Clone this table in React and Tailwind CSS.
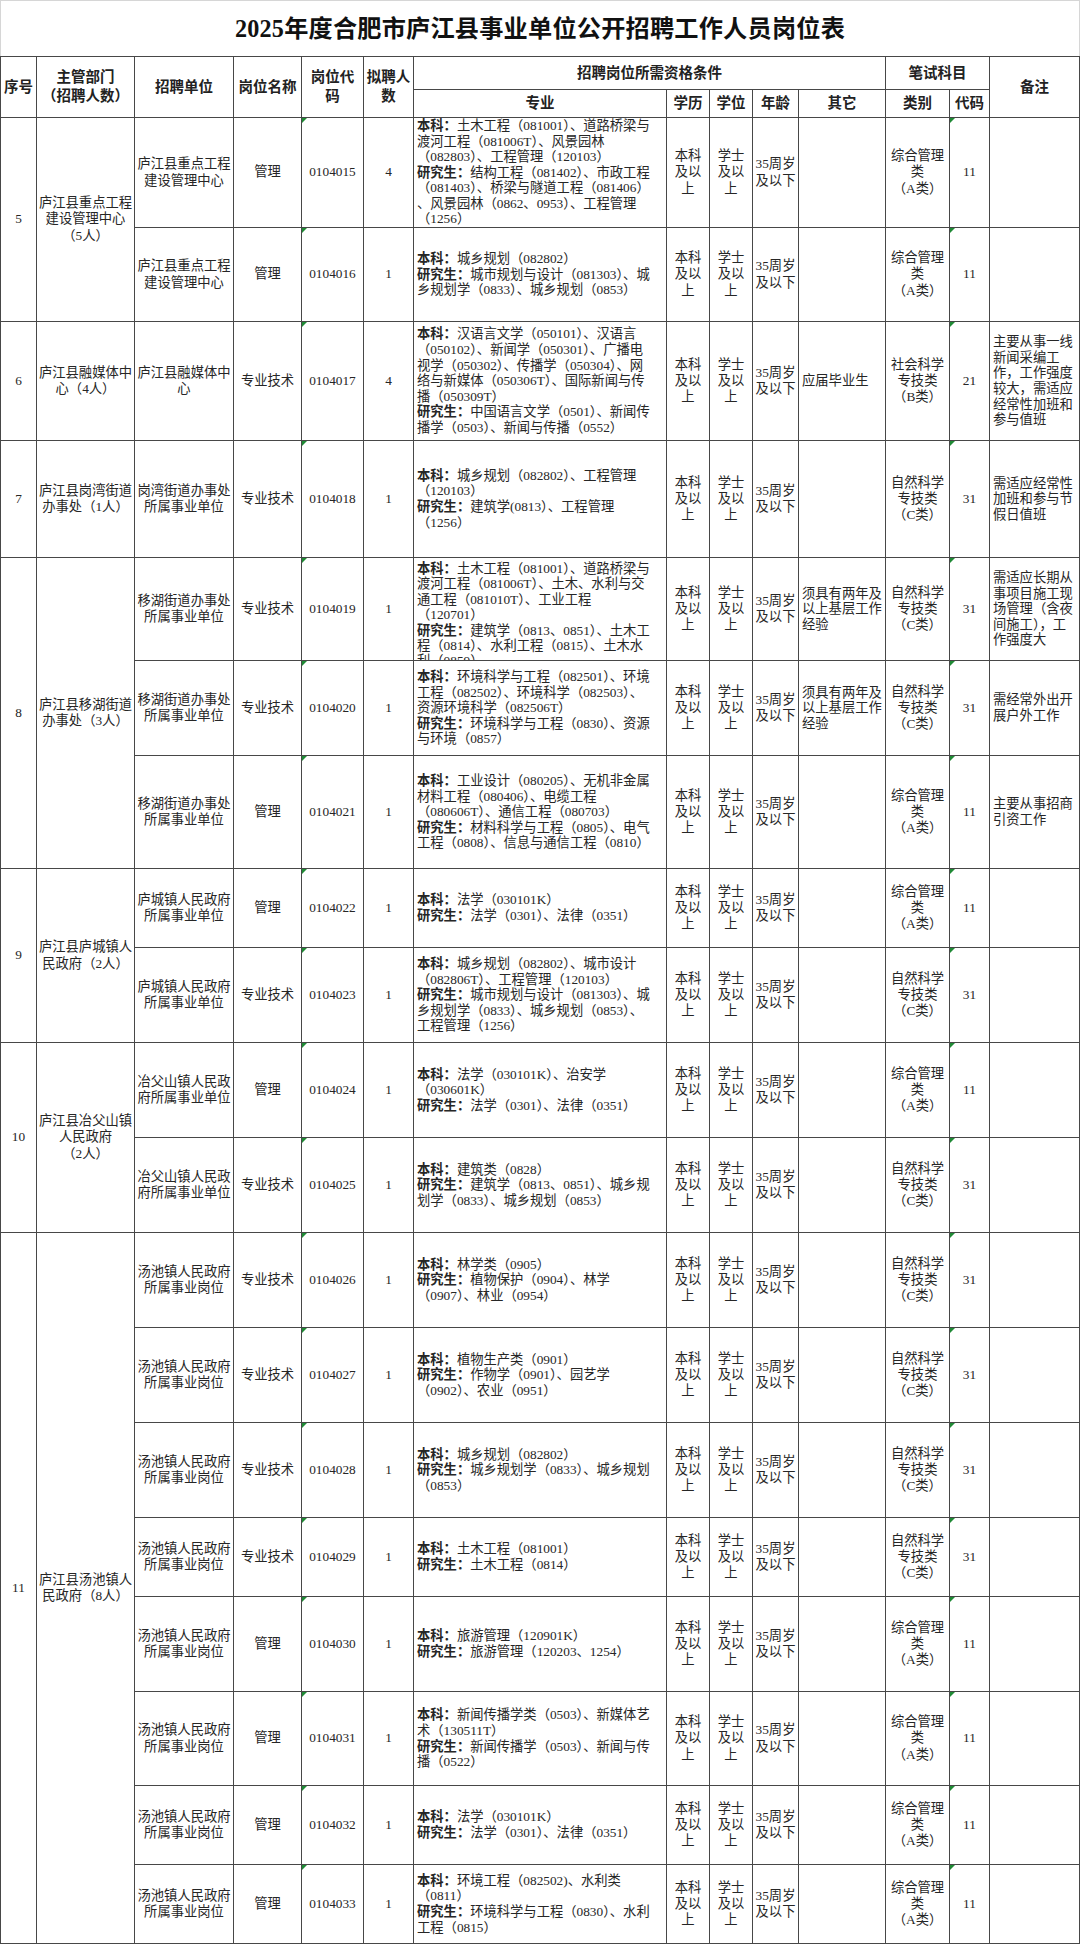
import React from 'react';

const CAT = {
  A: { lines: ['综合管理', '类', '（A类）'], code: '11' },
  B: { lines: ['社会科学', '专技类', '（B类）'], code: '21' },
  C: { lines: ['自然科学', '专技类', '（C类）'], code: '31' },
};

const SPAN = { 1: '', 2: 'row-span-2', 3: 'row-span-3', 8: 'row-span-8' };

const OTHER2 = ['须具有两年及', '以上基层工作', '经验'];
const YC = ['移湖街道办事处', '所属事业单位'];
const LC = ['庐城镇人民政府', '所属事业单位'];
const YF = ['冶父山镇人民政', '府所属事业单位'];
const TC = ['汤池镇人民政府', '所属事业岗位'];

const groups = [
  {
    no: '5',
    dept: ['庐江县重点工程', '建设管理中心', '（5人）'],
    jobs: [
      {
        unit: ['庐江县重点工程', '建设管理中心'], name: '管理', code: '0104015', num: '4', cat: 'A',
        major: [
          '本科：土木工程（081001）、道路桥梁与',
          '渡河工程（081006T）、风景园林',
          '（082803）、工程管理（120103）',
          '研究生：结构工程（081402）、市政工程',
          '（081403）、桥梁与隧道工程（081406）',
          '、风景园林（0862、0953）、工程管理',
          '（1256）',
        ],
      },
      {
        unit: ['庐江县重点工程', '建设管理中心'], name: '管理', code: '0104016', num: '1', cat: 'A',
        major: [
          '本科：城乡规划（082802）',
          '研究生：城市规划与设计（081303）、城',
          '乡规划学（0833）、城乡规划（0853）',
        ],
      },
    ],
  },
  {
    no: '6',
    dept: ['庐江县融媒体中', '心（4人）'],
    jobs: [
      {
        unit: ['庐江县融媒体中', '心'], name: '专业技术', code: '0104017', num: '4', cat: 'B',
        other: ['应届毕业生'],
        note: ['主要从事一线', '新闻采编工', '作，工作强度', '较大，需适应', '经常性加班和', '参与值班'],
        major: [
          '本科：汉语言文学（050101）、汉语言',
          '（050102）、新闻学（050301）、广播电',
          '视学（050302）、传播学（050304）、网',
          '络与新媒体（050306T）、国际新闻与传',
          '播（050309T）',
          '研究生：中国语言文学（0501）、新闻传',
          '播学（0503）、新闻与传播（0552）',
        ],
      },
    ],
  },
  {
    no: '7',
    dept: ['庐江县岗湾街道', '办事处（1人）'],
    jobs: [
      {
        unit: ['岗湾街道办事处', '所属事业单位'], name: '专业技术', code: '0104018', num: '1', cat: 'C',
        note: ['需适应经常性', '加班和参与节', '假日值班'],
        major: [
          '本科：城乡规划（082802）、工程管理',
          '（120103）',
          '研究生：建筑学(0813）、工程管理',
          '（1256）',
        ],
      },
    ],
  },
  {
    no: '8',
    dept: ['庐江县移湖街道', '办事处（3人）'],
    jobs: [
      {
        unit: YC, name: '专业技术', code: '0104019', num: '1', cat: 'C', top: true,
        other: OTHER2,
        note: ['需适应长期从', '事项目施工现', '场管理（含夜', '间施工），工', '作强度大'],
        major: [
          '本科：土木工程（081001）、道路桥梁与',
          '渡河工程（081006T）、土木、水利与交',
          '通工程（081010T）、工业工程',
          '（120701）',
          '研究生：建筑学（0813、0851）、土木工',
          '程（0814）、水利工程（0815）、土木水',
          '利（0859）',
        ],
      },
      {
        unit: YC, name: '专业技术', code: '0104020', num: '1', cat: 'C',
        other: OTHER2,
        note: ['需经常外出开', '展户外工作'],
        major: [
          '本科：环境科学与工程（082501）、环境',
          '工程（082502）、环境科学（082503）、',
          '资源环境科学（082506T）',
          '研究生：环境科学与工程（0830）、资源',
          '与环境（0857）',
        ],
      },
      {
        unit: YC, name: '管理', code: '0104021', num: '1', cat: 'A',
        note: ['主要从事招商', '引资工作'],
        major: [
          '本科：工业设计（080205）、无机非金属',
          '材料工程（080406）、电缆工程',
          '（080606T）、通信工程（080703）',
          '研究生：材料科学与工程（0805）、电气',
          '工程（0808）、信息与通信工程（0810）',
        ],
      },
    ],
  },
  {
    no: '9',
    dept: ['庐江县庐城镇人', '民政府（2人）'],
    jobs: [
      {
        unit: LC, name: '管理', code: '0104022', num: '1', cat: 'A',
        major: ['本科：法学（030101K）', '研究生：法学（0301）、法律（0351）'],
      },
      {
        unit: LC, name: '专业技术', code: '0104023', num: '1', cat: 'C',
        major: [
          '本科：城乡规划（082802）、城市设计',
          '（082806T）、工程管理（120103）',
          '研究生：城市规划与设计（081303）、城',
          '乡规划学（0833）、城乡规划（0853）、',
          '工程管理（1256）',
        ],
      },
    ],
  },
  {
    no: '10',
    dept: ['庐江县冶父山镇', '人民政府', '（2人）'],
    jobs: [
      {
        unit: YF, name: '管理', code: '0104024', num: '1', cat: 'A',
        major: ['本科：法学（030101K）、治安学', '（030601K）', '研究生：法学（0301）、法律（0351）'],
      },
      {
        unit: YF, name: '专业技术', code: '0104025', num: '1', cat: 'C',
        major: [
          '本科：建筑类（0828）',
          '研究生：建筑学（0813、0851）、城乡规',
          '划学（0833）、城乡规划（0853）',
        ],
      },
    ],
  },
  {
    no: '11',
    dept: ['庐江县汤池镇人', '民政府（8人）'],
    jobs: [
      {
        unit: TC, name: '专业技术', code: '0104026', num: '1', cat: 'C',
        major: ['本科：林学类（0905）', '研究生：植物保护（0904）、林学', '（0907）、林业（0954）'],
      },
      {
        unit: TC, name: '专业技术', code: '0104027', num: '1', cat: 'C',
        major: ['本科：植物生产类（0901）', '研究生：作物学（0901）、园艺学', '（0902）、农业（0951）'],
      },
      {
        unit: TC, name: '专业技术', code: '0104028', num: '1', cat: 'C',
        major: ['本科：城乡规划（082802）', '研究生：城乡规划学（0833）、城乡规划', '（0853）'],
      },
      {
        unit: TC, name: '专业技术', code: '0104029', num: '1', cat: 'C',
        major: ['本科：土木工程（081001）', '研究生：土木工程（0814）'],
      },
      {
        unit: TC, name: '管理', code: '0104030', num: '1', cat: 'A',
        major: ['本科：旅游管理（120901K）', '研究生：旅游管理（120203、1254）'],
      },
      {
        unit: TC, name: '管理', code: '0104031', num: '1', cat: 'A',
        major: [
          '本科：新闻传播学类（0503）、新媒体艺',
          '术（130511T）',
          '研究生：新闻传播学（0503）、新闻与传',
          '播（0522）',
        ],
      },
      {
        unit: TC, name: '管理', code: '0104032', num: '1', cat: 'A',
        major: ['本科：法学（030101K）', '研究生：法学（0301）、法律（0351）'],
      },
      {
        unit: TC, name: '管理', code: '0104033', num: '1', cat: 'A',
        major: [
          '本科：环境工程（082502)、水利类',
          '（0811）',
          '研究生：环境科学与工程（0830）、水利',
          '工程（0815）',
        ],
      },
    ],
  },
];

const cellBase = 'bg-white overflow-hidden';
const center = `${cellBase} flex flex-col items-center justify-center text-center leading-[16.3px]`;
const left = `${cellBase} flex flex-col justify-center items-start pl-[3px] leading-[15.6px]`;

function Lines({ lines }) {
  return lines.map((l, i) => (
    <div key={i} className="whitespace-nowrap">
      {l}
    </div>
  ));
}

function MajorLine({ text }) {
  let prefix = null;
  let rest = text;
  if (text.startsWith('本科：')) {
    prefix = '本科：';
    rest = text.slice(3);
  } else if (text.startsWith('研究生：')) {
    prefix = '研究生：';
    rest = text.slice(4);
  }
  return (
    <div className="whitespace-nowrap">
      {prefix && <span className="font-bold">{prefix}</span>}
      {rest}
    </div>
  );
}

function Tri() {
  return (
    <span className="absolute left-0 top-0 h-0 w-0 border-t-[5px] border-r-[5px] border-t-[#1f8a35] border-r-transparent" />
  );
}

function HeaderCells() {
  const h = 'bg-white flex flex-col items-center justify-center text-center font-bold text-[14.5px] leading-[19px] text-[#222]';
  return (
    <>
      <div className={`${h} row-span-2`}>序号</div>
      <div className={`${h} row-span-2`}>
        <div>主管部门</div>
        <div>（招聘人数）</div>
      </div>
      <div className={`${h} row-span-2`}>招聘单位</div>
      <div className={`${h} row-span-2`}>岗位名称</div>
      <div className={`${h} row-span-2`}>
        <div>岗位代</div>
        <div>码</div>
      </div>
      <div className={`${h} row-span-2`}>
        <div>拟聘人</div>
        <div>数</div>
      </div>
      <div className={`${h} col-span-5`}>招聘岗位所需资格条件</div>
      <div className={`${h} col-span-2`}>笔试科目</div>
      <div className={`${h} row-span-2`}>备注</div>
      <div className={h}>专业</div>
      <div className={h}>学历</div>
      <div className={h}>学位</div>
      <div className={h}>年龄</div>
      <div className={h}>其它</div>
      <div className={h}>类别</div>
      <div className={h}>代码</div>
    </>
  );
}

function JobCells({ job }) {
  const cat = CAT[job.cat];
  return (
    <>
      <div className={center}>
        <Lines lines={job.unit} />
      </div>
      <div className={center}>{job.name}</div>
      <div className={`${center} relative`}>
        <Tri />
        {job.code}
      </div>
      <div className={center}>{job.num}</div>
      <div
        className={
          job.top
            ? `${cellBase} flex flex-col justify-start items-start pl-[3px] pt-[3px] leading-[15.4px]`
            : left
        }
      >
        {job.major.map((l, i) => (
          <MajorLine key={i} text={l} />
        ))}
      </div>
      <div className={center}>
        <Lines lines={['本科', '及以', '上']} />
      </div>
      <div className={center}>
        <Lines lines={['学士', '及以', '上']} />
      </div>
      <div className={center}>
        <Lines lines={['35周岁', '及以下']} />
      </div>
      <div className={left}>{job.other && <Lines lines={job.other} />}</div>
      <div className={center}>
        <Lines lines={cat.lines} />
      </div>
      <div className={`${center} relative`}>
        <Tri />
        {cat.code}
      </div>
      <div className={left}>{job.note && <Lines lines={job.note} />}</div>
    </>
  );
}

export default function App() {
  return (
    <div className="w-[1080px] h-[1944px] bg-white text-[#262626] font-['Liberation_Serif','Noto_Sans_CJK_SC',serif] text-[13.3px]">
      <div className="h-[56px] border-t border-l border-r border-[#d6d6d6] flex items-center justify-center">
        <h1 className="text-[24.2px] font-bold text-[#111] tracking-[0.2px] pt-[2px]">
          2025年度合肥市庐江县事业单位公开招聘工作人员岗位表
        </h1>
      </div>
      <div className="grid w-[1080px] gap-px p-px bg-[#474747] grid-cols-[35px_97px_98px_67px_61px_49px_252px_42px_42px_45px_86px_63px_39px_89px] grid-rows-[32px_27px_109px_93px_118px_116px_102px_94px_112px_78px_94px_94px_94px_94px_94px_94px_78px_94px_93px_78px_78px]">
        <HeaderCells />
        {groups.map((g) => (
          <React.Fragment key={g.no}>
            {g.jobs.map((job, idx) => (
              <React.Fragment key={job.code}>
                {idx === 0 && (
                  <>
                    <div className={`${center} ${SPAN[g.jobs.length]}`}>{g.no}</div>
                    <div className={`${center} ${SPAN[g.jobs.length]}`}>
                      <Lines lines={g.dept} />
                    </div>
                  </>
                )}
                <JobCells job={job} />
              </React.Fragment>
            ))}
          </React.Fragment>
        ))}
      </div>
    </div>
  );
}
